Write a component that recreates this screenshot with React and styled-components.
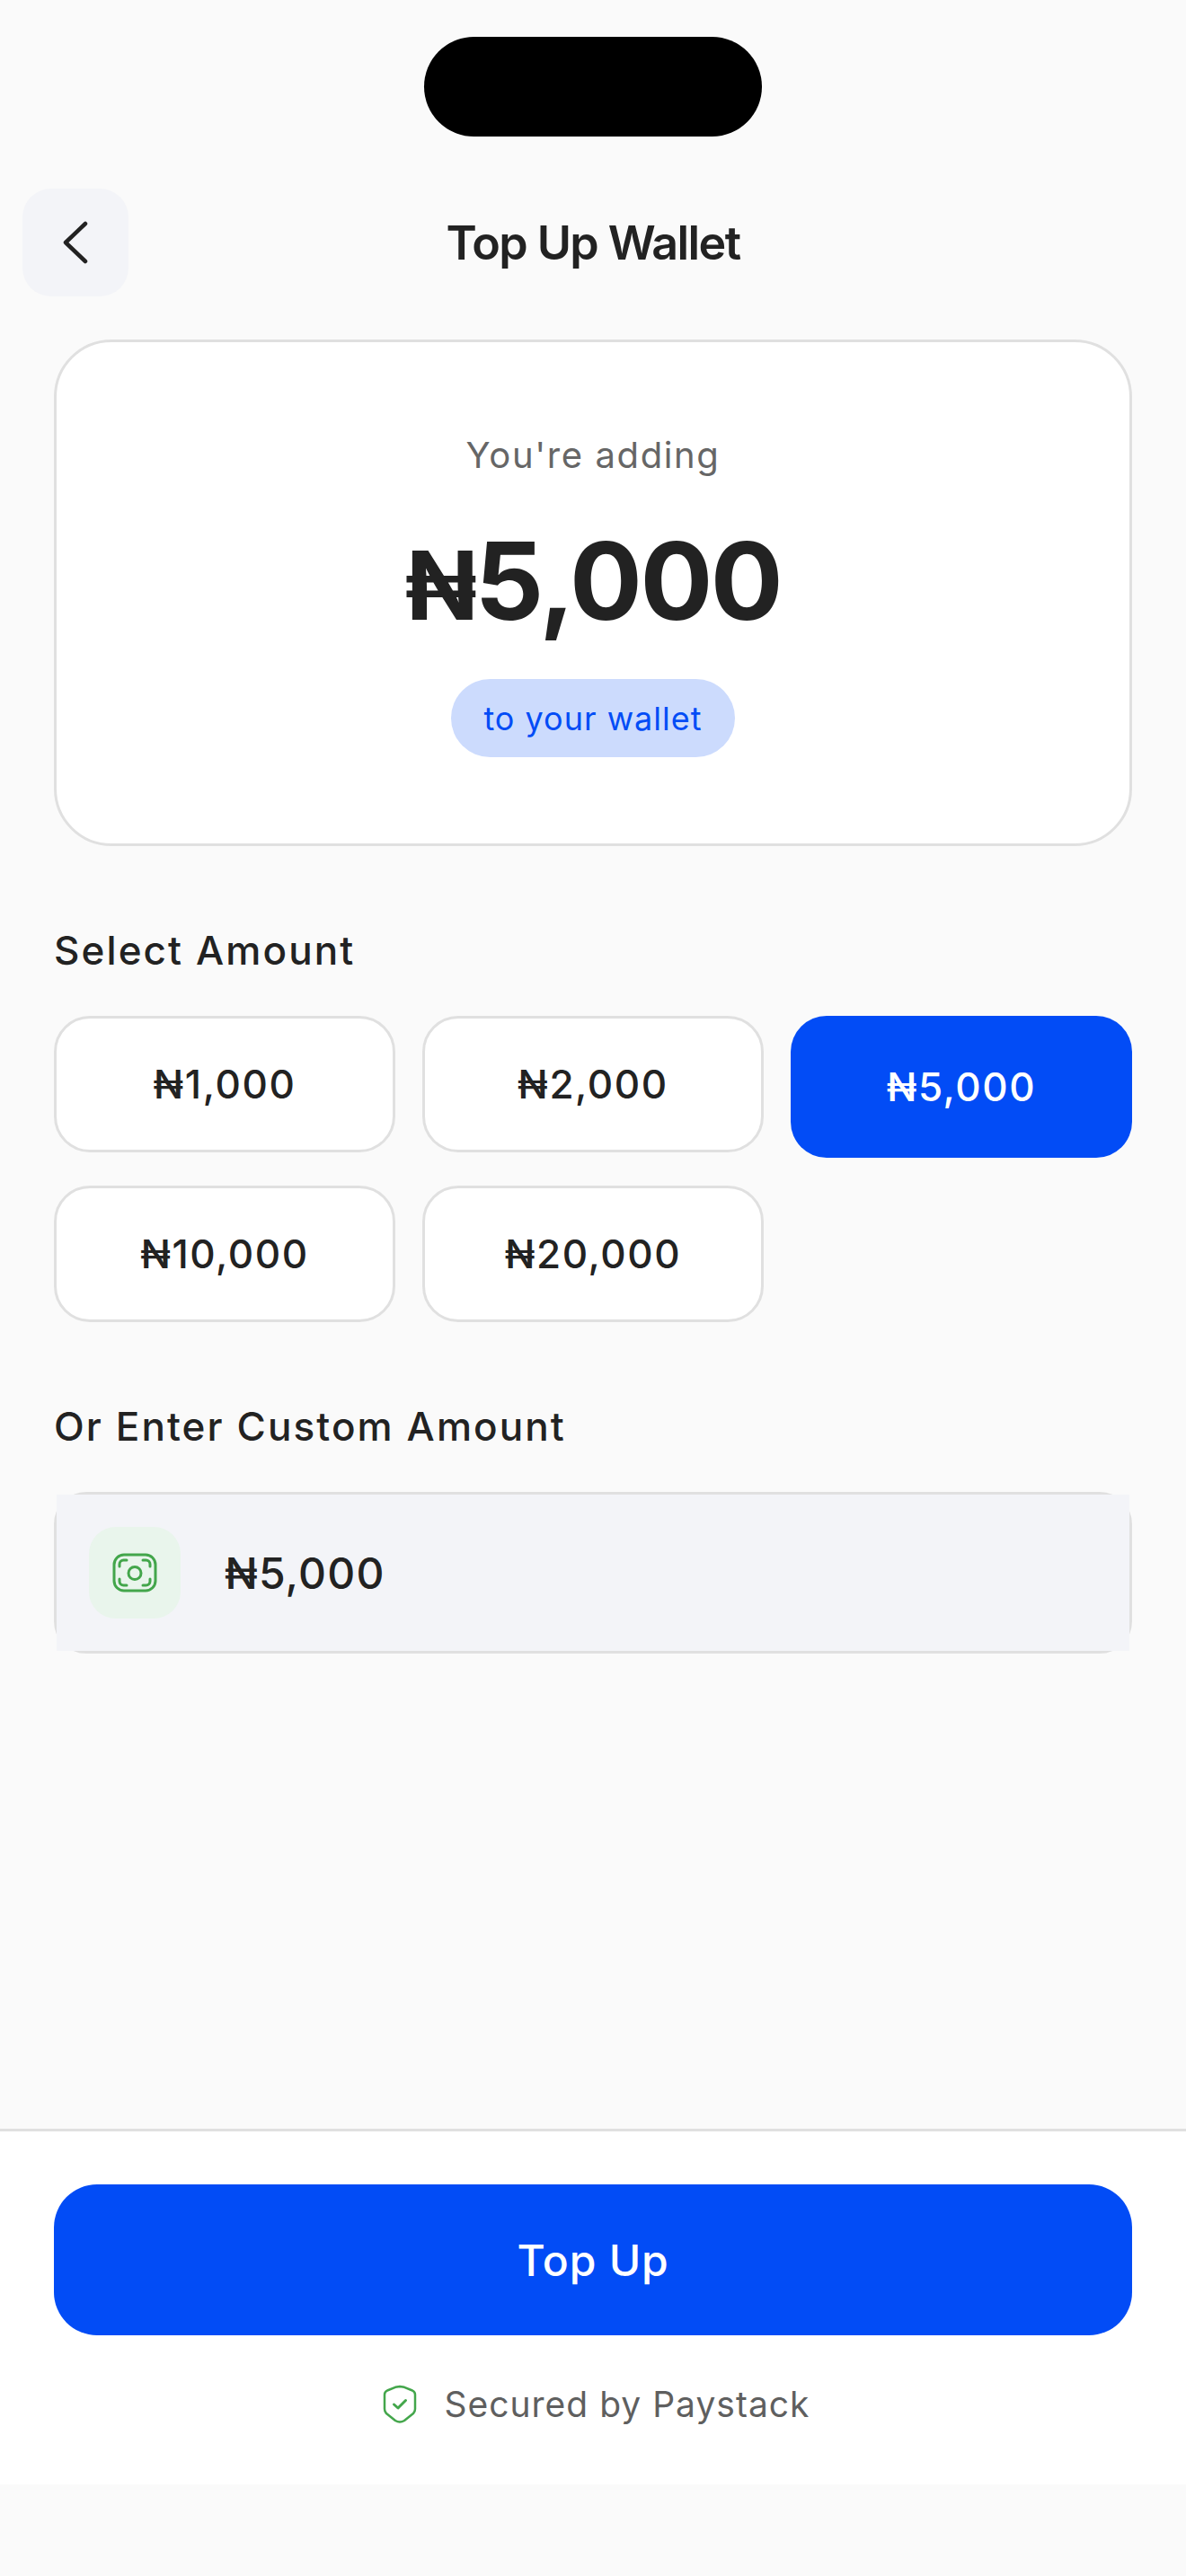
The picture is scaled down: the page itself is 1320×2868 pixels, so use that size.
import React from 'react';
import styled, { createGlobalStyle } from 'styled-components';

const GlobalStyle = createGlobalStyle`
  html, body {
    margin: 0;
    padding: 0;
    background: #fafafa;
  }
  * {
    box-sizing: border-box;
  }
  body {
    font-family: Inter, "Liberation Sans", sans-serif;
    color: #222222;
  }
`;

const Page = styled.div`
  width: 1320px;
  height: 2868px;
  display: flex;
  flex-direction: column;
  background: #fafafa;
`;

const IslandRow = styled.div`
  display: flex;
  justify-content: center;
  padding-top: 41px;
`;

const Island = styled.div`
  width: 376px;
  height: 111px;
  border-radius: 56px;
  background: #000;
`;

const Header = styled.header`
  display: grid;
  grid-template-columns: 118px 1fr 118px;
  align-items: center;
  margin-top: 58px;
  padding: 0 25px;
`;

const BackButton = styled.button`
  width: 118px;
  height: 120px;
  padding: 0;
  border: 0;
  border-radius: 32px;
  background: #f3f4f8;
  display: flex;
  align-items: center;
  justify-content: center;
`;

const Title = styled.h1`
  margin: 0;
  padding-top: 2px;
  text-align: center;
  font-size: 52px;
  line-height: 64px;
  font-weight: 600;
  letter-spacing: -1.6px;
  color: #222222;
`;

const Main = styled.main`
  flex: 1;
  padding: 48px 60px 0;
`;

const SummaryCard = styled.section`
  height: 564px;
  border: 3px solid #e0e0e0;
  border-radius: 64px;
  background: #ffffff;
  display: flex;
  flex-direction: column;
  align-items: center;
  padding-top: 101px;
`;

const SummaryLabel = styled.div`
  font-size: 40px;
  line-height: 50px;
  letter-spacing: 1.6px;
  color: #666666;
`;

const SummaryAmount = styled.div`
  margin-top: 50px;
  font-size: 120px;
  line-height: 130px;
  font-weight: 700;
  letter-spacing: -2.5px;
  color: #222222;
`;

const NairaSign = styled.span`
  font-size: 106px;
  line-height: 0;
`;

const Pill = styled.div`
  margin-top: 44px;
  width: 316px;
  height: 87px;
  border-radius: 44px;
  background: #ccdbfd;
  color: #024cf6;
  font-size: 36px;
  font-weight: 400;
  letter-spacing: 1px;
  display: flex;
  align-items: center;
  justify-content: center;
`;

const SectionLabel = styled.h2`
  margin: 90px 0 0;
  font-size: 44px;
  line-height: 52px;
  font-weight: 500;
  letter-spacing: 2.1px;
  color: #222222;
`;

const AmountGrid = styled.div`
  display: grid;
  grid-template-columns: repeat(3, 380px);
  column-gap: 30px;
  row-gap: 31px;
  align-items: start;
  margin-top: 47px;
`;

const AmountButton = styled.button`
  height: ${(p) => (p.$selected ? 158 : 152)}px;
  padding: 0;
  border: ${(p) => (p.$selected ? '0' : '3px solid #e0e0e0')};
  border-radius: 40px;
  background: ${(p) => (p.$selected ? '#024cf6' : '#ffffff')};
  color: ${(p) => (p.$selected ? '#ffffff' : '#222222')};
  font-family: inherit;
  font-size: 44px;
  font-weight: 500;
  letter-spacing: 1.6px;
`;

const CustomField = styled.div`
  margin-top: 47px;
  height: 180px;
  border: 3px solid #e0e0e0;
  border-radius: 36px;
`;

const CustomInner = styled.div`
  height: 100%;
  padding-left: 36px;
  background: #f3f4f8;
  display: flex;
  align-items: center;
  gap: 49px;
`;

const IconTile = styled.div`
  width: 102px;
  height: 102px;
  border-radius: 30px;
  background: #e9f5ec;
  display: flex;
  align-items: center;
  justify-content: center;
`;

const CustomValue = styled.div`
  font-size: 48px;
  font-weight: 500;
  letter-spacing: 1.2px;
  color: #222222;
`;

const Footer = styled.footer`
  height: 396px;
  border-top: 3px solid #e0e0e0;
  background: #ffffff;
  padding: 59px 60px 0;
`;

const BottomBand = styled.div`
  height: 102px;
`;

const TopUpButton = styled.button`
  width: 100%;
  height: 168px;
  border: 0;
  border-radius: 48px;
  background: #024cf6;
  color: #ffffff;
  font-family: inherit;
  font-size: 48px;
  font-weight: 500;
  letter-spacing: 0.8px;
`;

const SecureRow = styled.div`
  margin-top: 53px;
  padding-left: 8px;
  display: flex;
  align-items: center;
  justify-content: center;
  gap: 30px;
  font-size: 39px;
  line-height: 48px;
  letter-spacing: 1px;
  color: #5f5f5f;
`;

const ChevronIcon = () => (
  <svg width="30" height="48" viewBox="0 0 30 48" fill="none">
    <path d="M26 3 L4 24 L26 45" stroke="#222222" strokeWidth="4.5" strokeLinecap="round" strokeLinejoin="round" />
  </svg>
);

const CashIcon = () => (
  <svg width="50" height="44" viewBox="0 0 50 44" fill="none" stroke="#43a64b" strokeLinecap="round">
    <rect x="2" y="2" width="46" height="40" rx="11" strokeWidth="3" />
    <circle cx="25" cy="22.5" r="7" strokeWidth="3" />
    <path d="M8 15V12.5A4.5 4.5 0 0 1 12.5 8H16M34 8H37.5A4.5 4.5 0 0 1 42 12.5V15M42 29V31.5A4.5 4.5 0 0 1 37.5 36H34M16 36H12.5A4.5 4.5 0 0 1 8 31.5V29" strokeWidth="3" />
  </svg>
);

const ShieldIcon = () => (
  <svg width="38" height="44" viewBox="0 0 38 44" fill="none" stroke="#43a64b" strokeLinecap="round" strokeLinejoin="round">
    <path d="M19 2 L24 2.8 L33 6.5 Q36 8 36 11 V27 Q36 30 34 32 L24 40 Q19 43 14 40 L4 32 Q2 30 2 27 V11 Q2 8 5 6.5 L14 2.8 Z" strokeWidth="2.5" />
    <path d="M12.5 22 L17 26 L25.5 17.5" strokeWidth="3" />
  </svg>
);

const amounts = ['₦1,000', '₦2,000', '₦5,000', '₦10,000', '₦20,000'];

export default function App() {
  return (
    <>
      <GlobalStyle />
      <Page>
        <IslandRow>
          <Island />
        </IslandRow>
        <Header>
          <BackButton aria-label="Back">
            <ChevronIcon />
          </BackButton>
          <Title>Top Up Wallet</Title>
        </Header>
        <Main>
          <SummaryCard>
            <SummaryLabel>You're adding</SummaryLabel>
            <SummaryAmount>
              <NairaSign>₦</NairaSign>5,000
            </SummaryAmount>
            <Pill>to your wallet</Pill>
          </SummaryCard>
          <SectionLabel>Select Amount</SectionLabel>
          <AmountGrid>
            {amounts.map((a) => (
              <AmountButton key={a} $selected={a === '₦5,000'}>
                {a}
              </AmountButton>
            ))}
          </AmountGrid>
          <SectionLabel>Or Enter Custom Amount</SectionLabel>
          <CustomField>
            <CustomInner>
              <IconTile>
                <CashIcon />
              </IconTile>
              <CustomValue>₦5,000</CustomValue>
            </CustomInner>
          </CustomField>
        </Main>
        <Footer>
          <TopUpButton>Top Up</TopUpButton>
          <SecureRow>
            <ShieldIcon />
            Secured by Paystack
          </SecureRow>
        </Footer>
        <BottomBand />
      </Page>
    </>
  );
}
